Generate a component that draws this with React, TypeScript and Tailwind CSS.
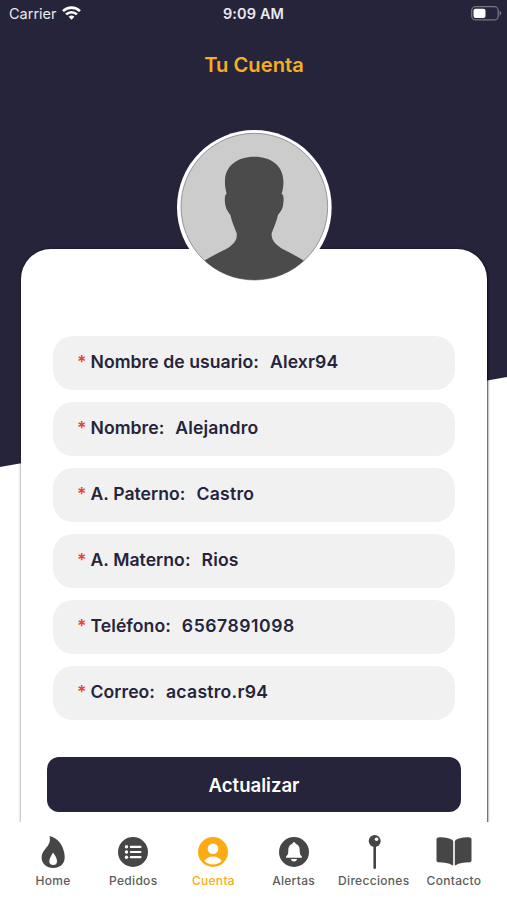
import React from 'react';

const fields = [
    { label: 'Nombre de usuario:', value: 'Alexr94', tracking: 'tracking-[0.15px]' },
    { label: 'Nombre:', value: 'Alejandro', tracking: 'tracking-[0.15px]' },
    { label: 'A. Paterno:', value: 'Castro', tracking: 'tracking-[0.25px]' },
    { label: 'A. Materno:', value: 'Rios', tracking: 'tracking-[0.15px]' },
    { label: 'Teléfono:', value: '6567891098', tracking: 'tracking-[0.55px]' },
    { label: 'Correo:', value: 'acastro.r94', tracking: 'tracking-[0.25px]' },
];

function StatusBar() {
    return (
        <div className="grid h-7 shrink-0 grid-cols-[1fr_auto_1fr] items-center text-[14.5px] text-[#e9e9f0]">
            <div className="flex items-center gap-1.5 pl-[9px]">
                <span>Carrier</span>
                <svg className="-mt-0.5 -ml-px h-[14px] w-[19px]" viewBox="0 0 19 14" fill="none" stroke="white" strokeWidth="2.6">
                    <path d="M1 5.100a12.200 12.200 0 0 1 17 0" />
                    <path d="M4.100 8.400a7.800 7.800 0 0 1 10.800 0" />
                    <path d="M9.500 13.800L6.600 10.800a4.200 4.200 0 0 1 5.800 0z" fill="white" stroke="none" />
                </svg>
            </div>
            <span className="font-semibold tracking-[0.1px]">9:09 AM</span>
            <div className="flex justify-end pr-[5px]">
                <svg className="-mt-px h-[15px] w-[31px]" viewBox="0 0 31 15">
                    <rect x="0.7" y="0.7" width="26.500" height="13.200" rx="4" fill="none" stroke="#77758a" strokeWidth="1.3" />
                    <rect x="2.500" y="2.700" width="12" height="9.200" rx="2" fill="white" />
                    <path d="M28.600 4.800v5c2.200-.8 2.200-4.200 0-5z" fill="#77758a" />
                </svg>
            </div>
        </div>
    );
}

function Avatar() {
    return (
        <svg className="h-[154.67px] w-[154.67px] overflow-visible" viewBox="38 30 464 464">
            <defs>
                <clipPath id="face">
                    <circle cx="270" cy="260" r="220" />
                </clipPath>
            </defs>
            <circle cx="270" cy="262" r="232" fill="white" />
            <circle cx="270" cy="260" r="220" fill="#cccccc" stroke="#85858b" strokeWidth="2.5" />
            <g clipPath="url(#face)">
                <path
                    fill="#4b4b4b"
                    d="M270 110C218 110 184 138 182 180C181 196 184 209 187 221C181 223 181 238 182 248C184 266 191 276 198 284C202 305 211 322 217 340C220 362 205 375 184 388C163 399 142 408 122 421L60 500H480L417 421C397 408 377 399 356 388C335 375 320 362 322 340C328 322 337 305 341 284C349 276 356 266 357 248C359 238 358 223 352 221C356 209 358 196 357 180C355 138 322 110 270 110Z"
                />
            </g>
        </svg>
    );
}

function FlameIcon() {
    return (
        <svg className="h-9 w-9" viewBox="0 0 36 36">
            <path
                fill="#464646"
                d="M14.500 2C21 3.500 26 8.500 28 14.500C29 17.500 29.700 20 29.700 23C29.700 30 25 34 18.200 34C11.500 34 6.600 29.800 6.600 23.500C6.600 19.500 8.500 17 11 14C14 10.500 15.800 7.500 14.500 2Z"
            />
            <path fill="white" d="M18 18.500C20 21.500 22 24 22 27.200C22 29.900 20.500 31 18.200 31C15.800 31 14.300 29.800 14.300 27.200C14.300 24 16.500 21.800 18 18.500Z" />
        </svg>
    );
}

function ListIcon() {
    return (
        <svg className="h-9 w-9" viewBox="0 0 36 36">
            <circle cx="18" cy="18" r="15" fill="#464646" />
            <g fill="white">
                <circle cx="11.500" cy="12.800" r="1.700" />
                <circle cx="11.500" cy="18" r="1.700" />
                <circle cx="11.500" cy="23.200" r="1.700" />
                <rect x="14.800" y="11.700" width="11.700" height="2.200" rx="1" />
                <rect x="14.800" y="16.900" width="11.700" height="2.200" rx="1" />
                <rect x="14.800" y="22.100" width="11.700" height="2.200" rx="1" />
            </g>
        </svg>
    );
}

function UserIcon() {
    return (
        <svg className="h-9 w-9" viewBox="0 0 36 36">
            <circle cx="18" cy="18" r="15" fill="#fcab14" />
            <circle cx="18" cy="14.700" r="5.300" fill="white" />
            <path fill="white" d="M9.400 27C11 24 14.200 22.500 18 22.500S25 24 26.600 27C24.500 29.200 21.500 30.500 18 30.500S11.500 29.200 9.400 27Z" />
        </svg>
    );
}

function BellIcon() {
    return (
        <svg className="h-9 w-9" viewBox="0 0 36 36">
            <circle cx="18" cy="18" r="15" fill="#464646" />
            <path
                fill="white"
                d="M18 8.300C19 8.300 19.500 8.900 19.600 9.800C22.600 10.700 23.700 13.100 23.700 16.200C23.700 20.200 24.500 21.300 25.900 22.500V23.800H10.100V22.500C11.500 21.300 12.300 20.200 12.300 16.200C12.300 13.100 13.400 10.700 16.400 9.800C16.500 8.900 17 8.300 18 8.300Z"
            />
            <path fill="white" d="M15 24.900H21C20.800 26.600 19.600 27.400 18 27.400S15.200 26.600 15 24.900Z" />
        </svg>
    );
}

function PinIcon() {
    return (
        <svg className="h-9 w-9" viewBox="0 0 36 36">
            <rect x="17.400" y="11" width="2.600" height="24" rx="1.300" fill="#464646" />
            <circle cx="18.700" cy="7" r="6" fill="#464646" />
            <circle cx="20.600" cy="5.200" r="1.800" fill="white" />
        </svg>
    );
}

function BookIcon() {
    return (
        <svg className="h-9 w-9" viewBox="0 0 36 36" fill="#464646">
            <path d="M2.300 3.400C7.500 2.900 13 3.900 16 5.800C16.800 6.300 17.200 7 17.200 7.800V30.800C17.200 31.400 16.800 31.600 16.300 31.200C13 29 8 28.300 2.500 28.300C1.300 28.300 .5 27.700 .5 26.500V5.300C.5 4.200 1.100 3.500 2.300 3.400Z" />
            <path d="M33.700 3.400C28.500 2.900 23 3.900 20 5.800C19.200 6.300 18.800 7 18.800 7.800V30.800C18.800 31.400 19.200 31.600 19.700 31.200C23 29 28 28.300 33.500 28.300C34.700 28.300 35.500 27.700 35.500 26.500V5.300C35.500 4.200 34.900 3.500 33.700 3.400Z" />
        </svg>
    );
}

const tabs = [
    { name: 'Home', icon: <FlameIcon /> },
    { name: 'Pedidos', icon: <ListIcon /> },
    { name: 'Cuenta', icon: <UserIcon />, active: true },
    { name: 'Alertas', icon: <BellIcon /> },
    { name: 'Direcciones', icon: <PinIcon /> },
    { name: 'Contacto', icon: <BookIcon /> },
];

export default function App() {
    return (
        <div className="flex h-[900px] w-[507px] flex-col overflow-hidden bg-white font-['Inter',sans-serif]">
            <div className="grid h-[822px] shrink-0 overflow-hidden">
                <div className="col-start-1 row-start-1 h-[467px] bg-[#26243a] [clip-path:polygon(0_0,100%_0,100%_377px,0_467px)]" />
                <div className="z-10 col-start-1 row-start-1 flex h-[822px] flex-col">
                    <StatusBar />
                    <h1 className="mt-[22px] pl-px text-center text-[20.2px] leading-[30px] font-semibold text-[#f4ae23]">Tu Cuenta</h1>
                    <div className="z-10 mt-[50px] -mb-[35.67px] flex justify-center pl-px">
                        <Avatar />
                    </div>
                    <div className="mr-5 ml-[21px] h-[640px] shrink-0 rounded-t-[30px] bg-white px-[26px] pt-[87px] shadow-[1px_1px_2px_#00000099,0_0_2px_1px_#00000040]">
                        <div className="mx-1.5 flex flex-col gap-3">
                            {fields.map((f) => (
                                <div key={f.label} className="flex h-[54px] items-center rounded-[20px] bg-[#f1f1f1] pb-px pl-6 text-[17.6px] font-semibold text-[#26243a]">
                                    <span className="w-[13.5px] text-[#ea4330]">*</span>
                                    <span className="tracking-[0.05px]">{f.label}</span>
                                    <span className={`ml-[11px] ${f.tracking}`}>{f.value}</span>
                                </div>
                            ))}
                        </div>
                        <button className="mt-[37px] h-[55px] w-full rounded-xl bg-[#26243a] pt-0.5 text-[18.6px] font-semibold text-white">Actualizar</button>
                    </div>
                </div>
            </div>
            <nav className="flex pt-3 pr-[13px] pl-[13px]">
                {tabs.map((t) => (
                    <div key={t.name} className="flex w-0 flex-1 flex-col items-center">
                        {t.icon}
                        <span className={`mt-0.5 text-xs leading-[18px] font-medium tracking-[0.3px] ${t.active ? 'text-[#fcab14]' : 'text-[#5c5c5c]'}`}>
                            {t.name}
                        </span>
                    </div>
                ))}
            </nav>
        </div>
    );
}
